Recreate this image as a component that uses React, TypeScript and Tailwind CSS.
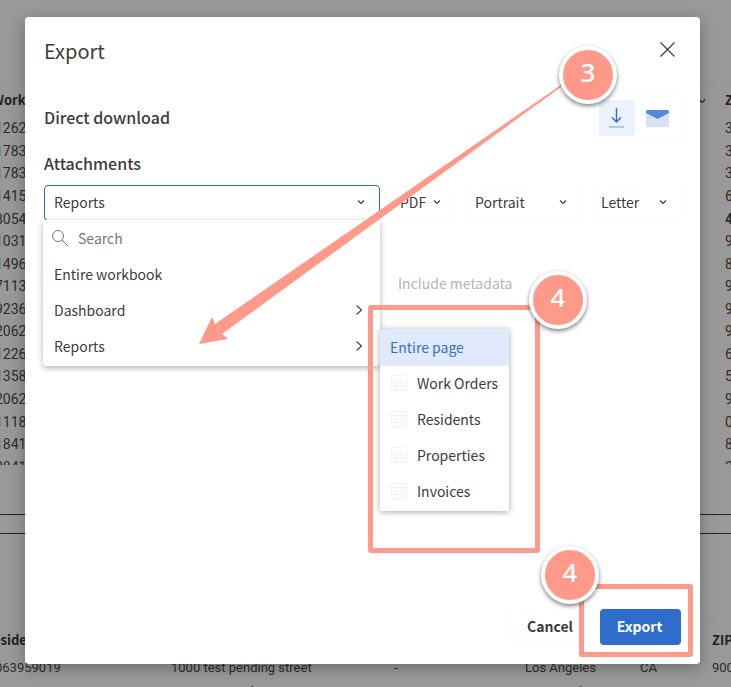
import React from "react";

const workOrderIds = ["11262", "11783", "11783", "11415", "18054", "11031", "11496", "17113", "19236", "12062", "11226", "11358", "12062", "11118", "11841", "12841"];
const workOrderZips = ["30312", "30318", "30314", "60629", "48205", "90011", "80219", "90026", "90011", "90210", "60614", "55407", "90044", "08102", "80219", "20841"];
const residentRows = [
  ["063959019", "1000 test pending street", "-", "Los Angeles", "CA", "90015"],
  ["068289987", "1000 uat pending", "", "Los Angeles", "CA", "90015"],
];
const workbookItems = [
  { label: "Entire workbook", nested: false },
  { label: "Dashboard", nested: true },
  { label: "Reports", nested: true },
];
const pageItems = ["Work Orders", "Residents", "Properties", "Invoices"];

const ui = "font-['Noto_Sans_CJK_SC','Noto_Sans',sans-serif]";

function Chevron({ className = "" }: { className?: string }) {
  return (
    <svg className={className} width="8" height="8" viewBox="0 0 8 8" fill="none" stroke="currentColor" strokeWidth="1.2">
      <path d="M1 2.5 4 5.5 7 2.5" />
    </svg>
  );
}

function Backdrop() {
  return (
    <div className="absolute inset-0 overflow-hidden bg-[#999] text-sm text-[#2c2c2c] font-[Roboto,sans-serif]">
      <div className="mt-[83px] h-[382px] overflow-hidden border-t border-[#949494]">
        <table className="-ml-2 w-[calc(100%+8px)] table-fixed border-collapse">
          <thead>
            <tr className={`h-[33px] text-left text-[13px] leading-4 text-[#222] ${ui}`}>
              <th className="pb-[2px] font-bold">Work Order</th>
              <th className="w-[27px]">
                <Chevron />
              </th>
              <th className="w-[6px] pb-[2px] font-bold whitespace-nowrap">ZIP</th>
            </tr>
          </thead>
        </table>
        <table className="-ml-[5px] h-[361px] w-[calc(100%+5px)] table-fixed border-collapse">
          <tbody>
            {workOrderIds.map((id, i) => (
              <tr key={i}>
                <td className="leading-5">{id.slice(1)}</td>
                <td className={i === 4 ? "w-[6px] leading-5 font-bold" : "w-[6px] leading-5"}>{workOrderZips[i]}</td>
              </tr>
            ))}
          </tbody>
        </table>
      </div>
      <div className="mt-[49px] h-5 border-y border-[#222]" />
      <div className="mt-[89px] border-t border-[#949494]">
        <table className="-ml-[7px] w-[calc(100%+7px)] table-fixed border-collapse">
          <thead>
            <tr className={`h-8 text-left text-[13px] leading-4 text-[#222] ${ui}`}>
              <th className="w-[178px] font-bold">esident ID</th>
              <th className="w-[223px]" />
              <th className="w-[131px]" />
              <th className="w-[115px]" />
              <th />
              <th className="w-[19px] font-bold">ZIP</th>
            </tr>
          </thead>
          <tbody>
            {residentRows.map((row, r) => (
              <tr key={r} className="h-6 text-[13px]">
                {row.map((cell, c) => (
                  <td key={c} className={c === 0 ? "pl-[2px] leading-5 whitespace-nowrap" : "leading-5 whitespace-nowrap"}>{cell}</td>
                ))}
              </tr>
            ))}
          </tbody>
        </table>
      </div>
    </div>
  );
}

function Picker({ label, width }: { label: string; width: string }) {
  return (
    <button type="button" className={`flex h-[35px] items-center justify-between rounded border border-[#fcfcfc] pr-[13px] pb-[2px] pl-2 ${width}`}>
      {label}
      <Chevron />
    </button>
  );
}

function WorkbookMenu() {
  return (
    <div className="absolute top-[35px] -left-px w-[337px] rounded-b bg-white pb-[2px] shadow-[0_2px_6px_rgba(0,0,0,0.3)]">
      <label className="flex h-9 items-center gap-[9px] px-2 pb-px">
        <svg width="18" height="18" viewBox="0 0 18 18" fill="none" stroke="#777">
          <circle cx="7" cy="7" r="5.5" />
          <path d="m11 11 6 6" />
        </svg>
        <input type="text" aria-label="Search" placeholder="Search" className="min-w-0 flex-1 outline-none placeholder:text-[#767676]" />
      </label>
      {workbookItems.map((item) => (
        <button key={item.label} type="button" className="flex h-9 w-full items-center justify-between pr-[17px] pl-[11px]">
          {item.label}
          {item.nested && (
            <svg width="8" height="12" viewBox="0 0 8 12" fill="none" stroke="#444" strokeWidth="1.2">
              <path d="m1.500 1.500 5 4.500-5 4.500" />
            </svg>
          )}
        </button>
      ))}
    </div>
  );
}

function PageMenu() {
  return (
    <div className="absolute top-[144px] left-[336px] w-[129px] bg-white pb-px shadow-[0_1px_6px_rgba(0,0,0,0.35)]">
      <button type="button" className="flex h-[37px] w-full items-center bg-[#e1eafd] pb-[2px] pl-[10px] text-[#3070cd]">Entire page</button>
      {pageItems.map((item) => (
        <button key={item} type="button" className="flex h-9 w-full items-center gap-[10px] pb-[2px] pl-[11px] whitespace-nowrap">
          <svg width="16" height="16" viewBox="0 0 16 16" fill="none" stroke="#f3f3f3">
            <rect x="0.5" y="0.5" width="15" height="15" rx="1" />
            <path d="M1 4.500h14M1 8h14M1 11.500h14M5.500 5v10M10.500 5v10" />
          </svg>
          {item}
        </button>
      ))}
    </div>
  );
}

function Step({ n, place }: { n: number; place: string }) {
  return (
    <div className={`absolute flex size-[58px] items-center justify-center rounded-full border-4 border-white bg-[#ff9a8a] pb-[6px] text-[26px] leading-none font-medium text-white shadow-[0_2px_4px_rgba(0,0,0,0.5)] font-['Noto_Sans',sans-serif] ${place}`}>
      {n}
    </div>
  );
}

export default function App() {
  return (
    <div className="relative h-screen overflow-hidden">
      <Backdrop />
      <div className={`relative flex h-full pt-[17px] pr-[31px] pb-[23px] pl-[25px] text-sm leading-5 text-[#3c3c3c] ${ui}`}>
        <section role="dialog" aria-labelledby="title" className="flex flex-1 flex-col rounded bg-white px-[19px] pt-[18px] pb-[19px] shadow-[0_4px_16px_rgba(0,0,0,0.3)]">
          <header className="flex h-8 items-center justify-between">
            <h1 id="title" className="text-xl">Export</h1>
            <button type="button" aria-label="Close" className="mr-[6px] pb-1">
              <svg width="15" height="15" viewBox="0 0 15 15" fill="none" stroke="#444" strokeWidth="1.300">
                <path d="m.5.5 14 14M14.500.5.5 14.500" />
              </svg>
            </button>
          </header>
          <div className="mt-[27px] flex h-[47px] items-center justify-between">
            <h2 className="pb-[2px] text-base font-medium">Direct download</h2>
            <div className="flex h-[47px] items-center gap-[11px] rounded border border-[#fbfbfb] pr-[11px] pl-1">
              <button type="button" aria-label="Download" className="flex size-9 items-center justify-center rounded bg-[#ecf2fb]">
                <svg width="16" height="20" viewBox="0 0 16 20" fill="none" stroke="#2f6fd0" strokeWidth="1.500">
                  <path d="M7.500 0v14M3 9.500 7.500 14l4.500-4.500" />
                  <path d="M0 19h15" stroke="#9dbbe8" />
                </svg>
              </button>
              <button type="button" aria-label="Email" className="pt-[2px]">
                <svg width="23" height="17" viewBox="0 0 23 17">
                  <rect width="23" height="17" rx="1.500" fill="#d6e2f5" />
                  <path d="M0 2Q0 0 2 0h19q2 0 2 2v1L11.500 9 0 3z" fill="#5888d8" />
                </svg>
              </button>
            </div>
          </div>
          <h2 className="mt-[10px] text-base leading-6 font-medium">Attachments</h2>
          <div className="relative mt-[10px] flex gap-[11px]">
            <button type="button" className="flex h-9 w-[336px] items-center justify-between rounded border border-[#2f6bc5] pr-[14px] pb-[2px] pl-[9px]">
              Reports
              <Chevron />
            </button>
            <Picker label="PDF" width="w-[64px]" />
            <Picker label="Portrait" width="w-[115px]" />
            <Picker label="Letter" width="w-[89px]" />
            <WorkbookMenu />
            <PageMenu />
          </div>
          <label className="mt-[52px] ml-[335px] flex items-center gap-[7px] text-[#b5b5b5]">
            <input type="checkbox" disabled className="size-3 appearance-none" />
            Include metadata
          </label>
          <footer className="mt-auto flex h-9 justify-end gap-[9px] font-bold">
            <button type="button" className="w-20 rounded border border-[#fcfcfc] pr-[2px] pb-[2px]">Cancel</button>
            <button type="button" className="w-[81px] rounded bg-[#2f6dca] pr-[2px] pb-[2px] text-white">Export</button>
          </footer>
        </section>
      </div>
      <div className="pointer-events-none absolute inset-0">
        <svg className="absolute top-0 left-0" width="731" height="400" viewBox="0 0 731 400" fill="#ff9a8a">
          <path d="m561 85-346 239-3-7-13 27 29-5-6-5L561 87z" />
        </svg>
        <div className="absolute top-[305px] left-[368px] h-[248px] w-[172px] rounded-[3px] border-[5px] border-[#ff9a8a]" />
        <div className="absolute top-[584px] left-[579px] h-[73px] w-[114px] rounded-[3px] border-[5px] border-[#ff9a8a]" />
        <Step n={3} place="top-[46px] left-[559px]" />
        <Step n={4} place="top-[271px] left-[529px]" />
        <Step n={4} place="top-[546px] left-[541px]" />
      </div>
    </div>
  );
}
